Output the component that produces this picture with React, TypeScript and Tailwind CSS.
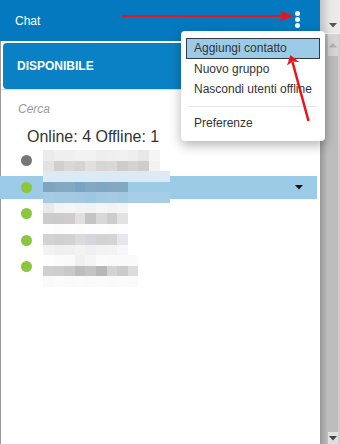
import React from "react";

// pixelated names (mosaic), one string of 12 hex colours per block row
const mosaic: string[][] = [
  ["ebebeb", "efefef", "efefef", "f2f2f2", "f2f2f2", "eeeeee", "efefef", "f0f0f0", "eeeeee", "e8e8e8", "f5f5f5", "ffffff"],
  ["e2e2e2", "cfcfcf", "d8d8d8", "d4d4d4", "e0e0e0", "d6d6d6", "d8d8d6", "cccccc", "d4d2d2", "cdcdcd", "f2f2f2", "ffffff"],
  ["dbeaf4", "dbeaf4", "dbeaf4", "dbeaf4", "dbeaf4", "dbeaf4", "dbeaf4", "dbeaf4", "dbeaf4", "dbeaf4", "dbeaf4", "dbeaf4"],
  ["7fa5be", "82a8c0", "84a9c2", "7aa5c2", "81a7c1", "7ea8c2", "84a6c0", "82a7c1", "9ccbe8", "9ccbe8", "9ccbe8", "9ccbe8"],
  ["a7cbe4", "a4c9e3", "a6c9e2", "a2c8e2", "9dc6e2", "a4c9e3", "a6cae3", "a3c9e2", "a8cde6", "a8cde6", "a8cde6", "a8cde6"],
  ["e8e8e8", "f3f3f3", "f6f6f6", "f3f3f3", "f2f2f2", "f5f5f5", "f3f3f3", "f5f5f5", "ffffff", "ffffff", "ffffff", "ffffff"],
  ["cccccc", "cbcbcb", "cfcdcb", "e0e0e0", "c4c4c4", "d8d8d8", "cdcdcd", "e2e2e2", "ffffff", "ffffff", "ffffff", "ffffff"],
  ["fdfdfd", "fcfcfc", "fdfdfd", "fcfcfc", "fdfdfd", "fdfdfd", "fcfcfc", "fdfdfd", "ffffff", "ffffff", "ffffff", "ffffff"],
  ["d3d3d3", "d0d0d0", "d2d2d2", "dbdbdb", "d6d7da", "d3d3d3", "d4d4d4", "e6e7ec", "ffffff", "ffffff", "ffffff", "ffffff"],
  ["f2f2f2", "efefef", "f0f0f0", "f3f3f3", "f0f0f0", "f2f2f2", "f3f3f3", "f7f7f9", "ffffff", "ffffff", "ffffff", "ffffff"],
  ["fdfdfd", "fbfbfb", "fafafa", "f0f0f0", "f5f5f5", "fbfbfb", "fafafa", "fafafa", "fafafa", "ffffff", "ffffff", "ffffff"],
  ["cfcfcf", "cecece", "c9c9c9", "bdbdbd", "c4c4c4", "b8b8b8", "d3d3d3", "cbcbcb", "dcdcdc", "ffffff", "ffffff", "ffffff"],
  ["fafafa", "fbfbfb", "fafafa", "fbfbfb", "fafafa", "fbfbfb", "fafafa", "fbfbfb", "fafafa", "ffffff", "ffffff", "ffffff"],
];

const contacts = [
  { online: false, active: false },
  { online: true, active: true },
  { online: true, active: false },
  { online: true, active: false },
  { online: true, active: false },
];

function Caret({ color }: { color: string }) {
  return (
    <svg width="8" height="5" viewBox="0 0 8 5">
      <path d="M0 0 H8 L4 4.5 Z" fill={color} />
    </svg>
  );
}

export default function App() {
  return (
    <div className="relative flex w-[340px] h-[444px] overflow-hidden bg-white font-['Liberation_Sans',Arial,sans-serif]">
      {/* chat panel */}
      <div className="flex flex-col w-[320px]">
        <div className="flex items-center h-[41px] px-[15px] bg-[#0579c0] text-white text-[12px]">
          <span>Chat</span>
          <div className="ml-auto mr-[5px] -mt-[3px] flex flex-col gap-[1px]">
            <div className="w-[5px] h-[5px] rounded-full bg-white" />
            <div className="w-[5px] h-[5px] rounded-full bg-white" />
            <div className="w-[5px] h-[5px] rounded-full bg-white" />
          </div>
        </div>

        <div className="flex-1 flex flex-col border-l border-[#9a9a9a]">
          <div className="pt-[2px] pl-[2px]">
            <div className="flex items-center h-[46px] pl-[14px] rounded-l-[4px] bg-[#0b81c5] text-white text-[12px] font-bold">
              DISPONIBILE
            </div>
          </div>
          <div className="h-px bg-[#dcdcdc]" />

          <div className="mt-[12px] pl-[17px] text-[12px] leading-[14px] italic text-[#9a9a9a]">Cerca</div>
          <div className="mt-[12px] pl-[26px] text-[16px] leading-[18px] text-[#333]">Online: 4 Offline: 1</div>

          <div className="relative mt-[3px] flex flex-col gap-[3.5px]">
            {contacts.map((c, i) => (
              <div
                key={i}
                className={`flex items-center h-[23px] mr-[3px] -ml-px pl-[20.5px] pr-[14px] ${c.active ? "bg-[#9ccbe8]" : ""}`}
              >
                <div className={`w-[11px] h-[11px] rounded-full ${c.online ? "bg-[#8cc63f]" : "bg-[#777]"}`} />
                {c.active && (
                  <div className="ml-auto">
                    <Caret color="#111" />
                  </div>
                )}
              </div>
            ))}
            {/* blurred names */}
            <div className="absolute left-[42px] top-[1px] flex flex-col">
              {mosaic.map((row, r) => (
                <div key={r} className="flex h-[10.5px]">
                  {row.map((c, k) => (
                    <div key={k} className="w-[10.6px] h-full" style={{ backgroundColor: "#" + c }} />
                  ))}
                </div>
              ))}
            </div>
          </div>
        </div>
      </div>

      {/* page scrollbar */}
      <div className="flex flex-col w-[20px]">
        <div className="flex items-end justify-center h-[34px] pb-[5px] pl-[6px] bg-gradient-to-r from-[#c4c4c4] via-[#e8e8e8] to-[#ececec] border-b border-[#f4f4f4]">
          <Caret color="#555" />
        </div>
        <div className="flex-1 flex bg-gradient-to-r from-[#999] via-[#c8c8c8] to-[#d4d4d4]">
          <div className="w-[8px]" />
          <div className="flex flex-col items-center w-[10px]">
            <div className="h-[22px] w-full flex items-center justify-center bg-[#d6d6d6]">
              <svg width="8" height="5" viewBox="0 0 8 5">
                <path d="M0 4.5 H8 L4 0 Z" fill="#b0b0b0" />
              </svg>
            </div>
            <div className="flex-1 w-full bg-[#bdbdbd]" />
            <div className="h-[12px] w-full flex items-center justify-center bg-[#e0e0e0]">
              <Caret color="#444" />
            </div>
          </div>
          <div className="flex-1 bg-[#d0d0d0]" />
        </div>
      </div>

      {/* menu */}
      <div className="absolute left-[181px] top-[31px] w-[144px] h-[110px] rounded-[4px] bg-white shadow-[0_4px_12px_rgba(0,0,0,0.3)] px-[5px] pt-[7px] text-[12px] text-[#333]">
        <div className="flex items-center h-[20.5px] pl-[7px] bg-[#9ccbe8] border border-[#2f3a44]">Aggiungi contatto</div>
        <div className="flex items-center h-[20.5px] pl-[8px]">Nuovo gruppo</div>
        <div className="flex items-center h-[20.5px] pl-[8px] whitespace-nowrap">Nascondi utenti offline</div>
        <div className="flex items-center h-[13.5px] px-[3px]">
          <div className="h-px w-full bg-[#e5e5e5]" />
        </div>
        <div className="flex items-center h-[20.5px] pl-[8px]">Preferenze</div>
      </div>

      {/* red annotation arrows */}
      <svg className="absolute left-0 top-0 pointer-events-none" width="340" height="444" viewBox="0 0 340 444">
        <line x1="122" y1="16" x2="284" y2="16" stroke="#e8141b" strokeWidth="2" />
        <polygon points="294,16 279,10.5 283,16 279,21.5" fill="#e8141b" />
        <line x1="308.5" y1="121" x2="292.5" y2="62" stroke="#e8141b" strokeWidth="2.5" />
        <polygon points="290.5,55 299,62 292.5,61.5 287,65.5" fill="#e8141b" />
      </svg>
    </div>
  );
}
